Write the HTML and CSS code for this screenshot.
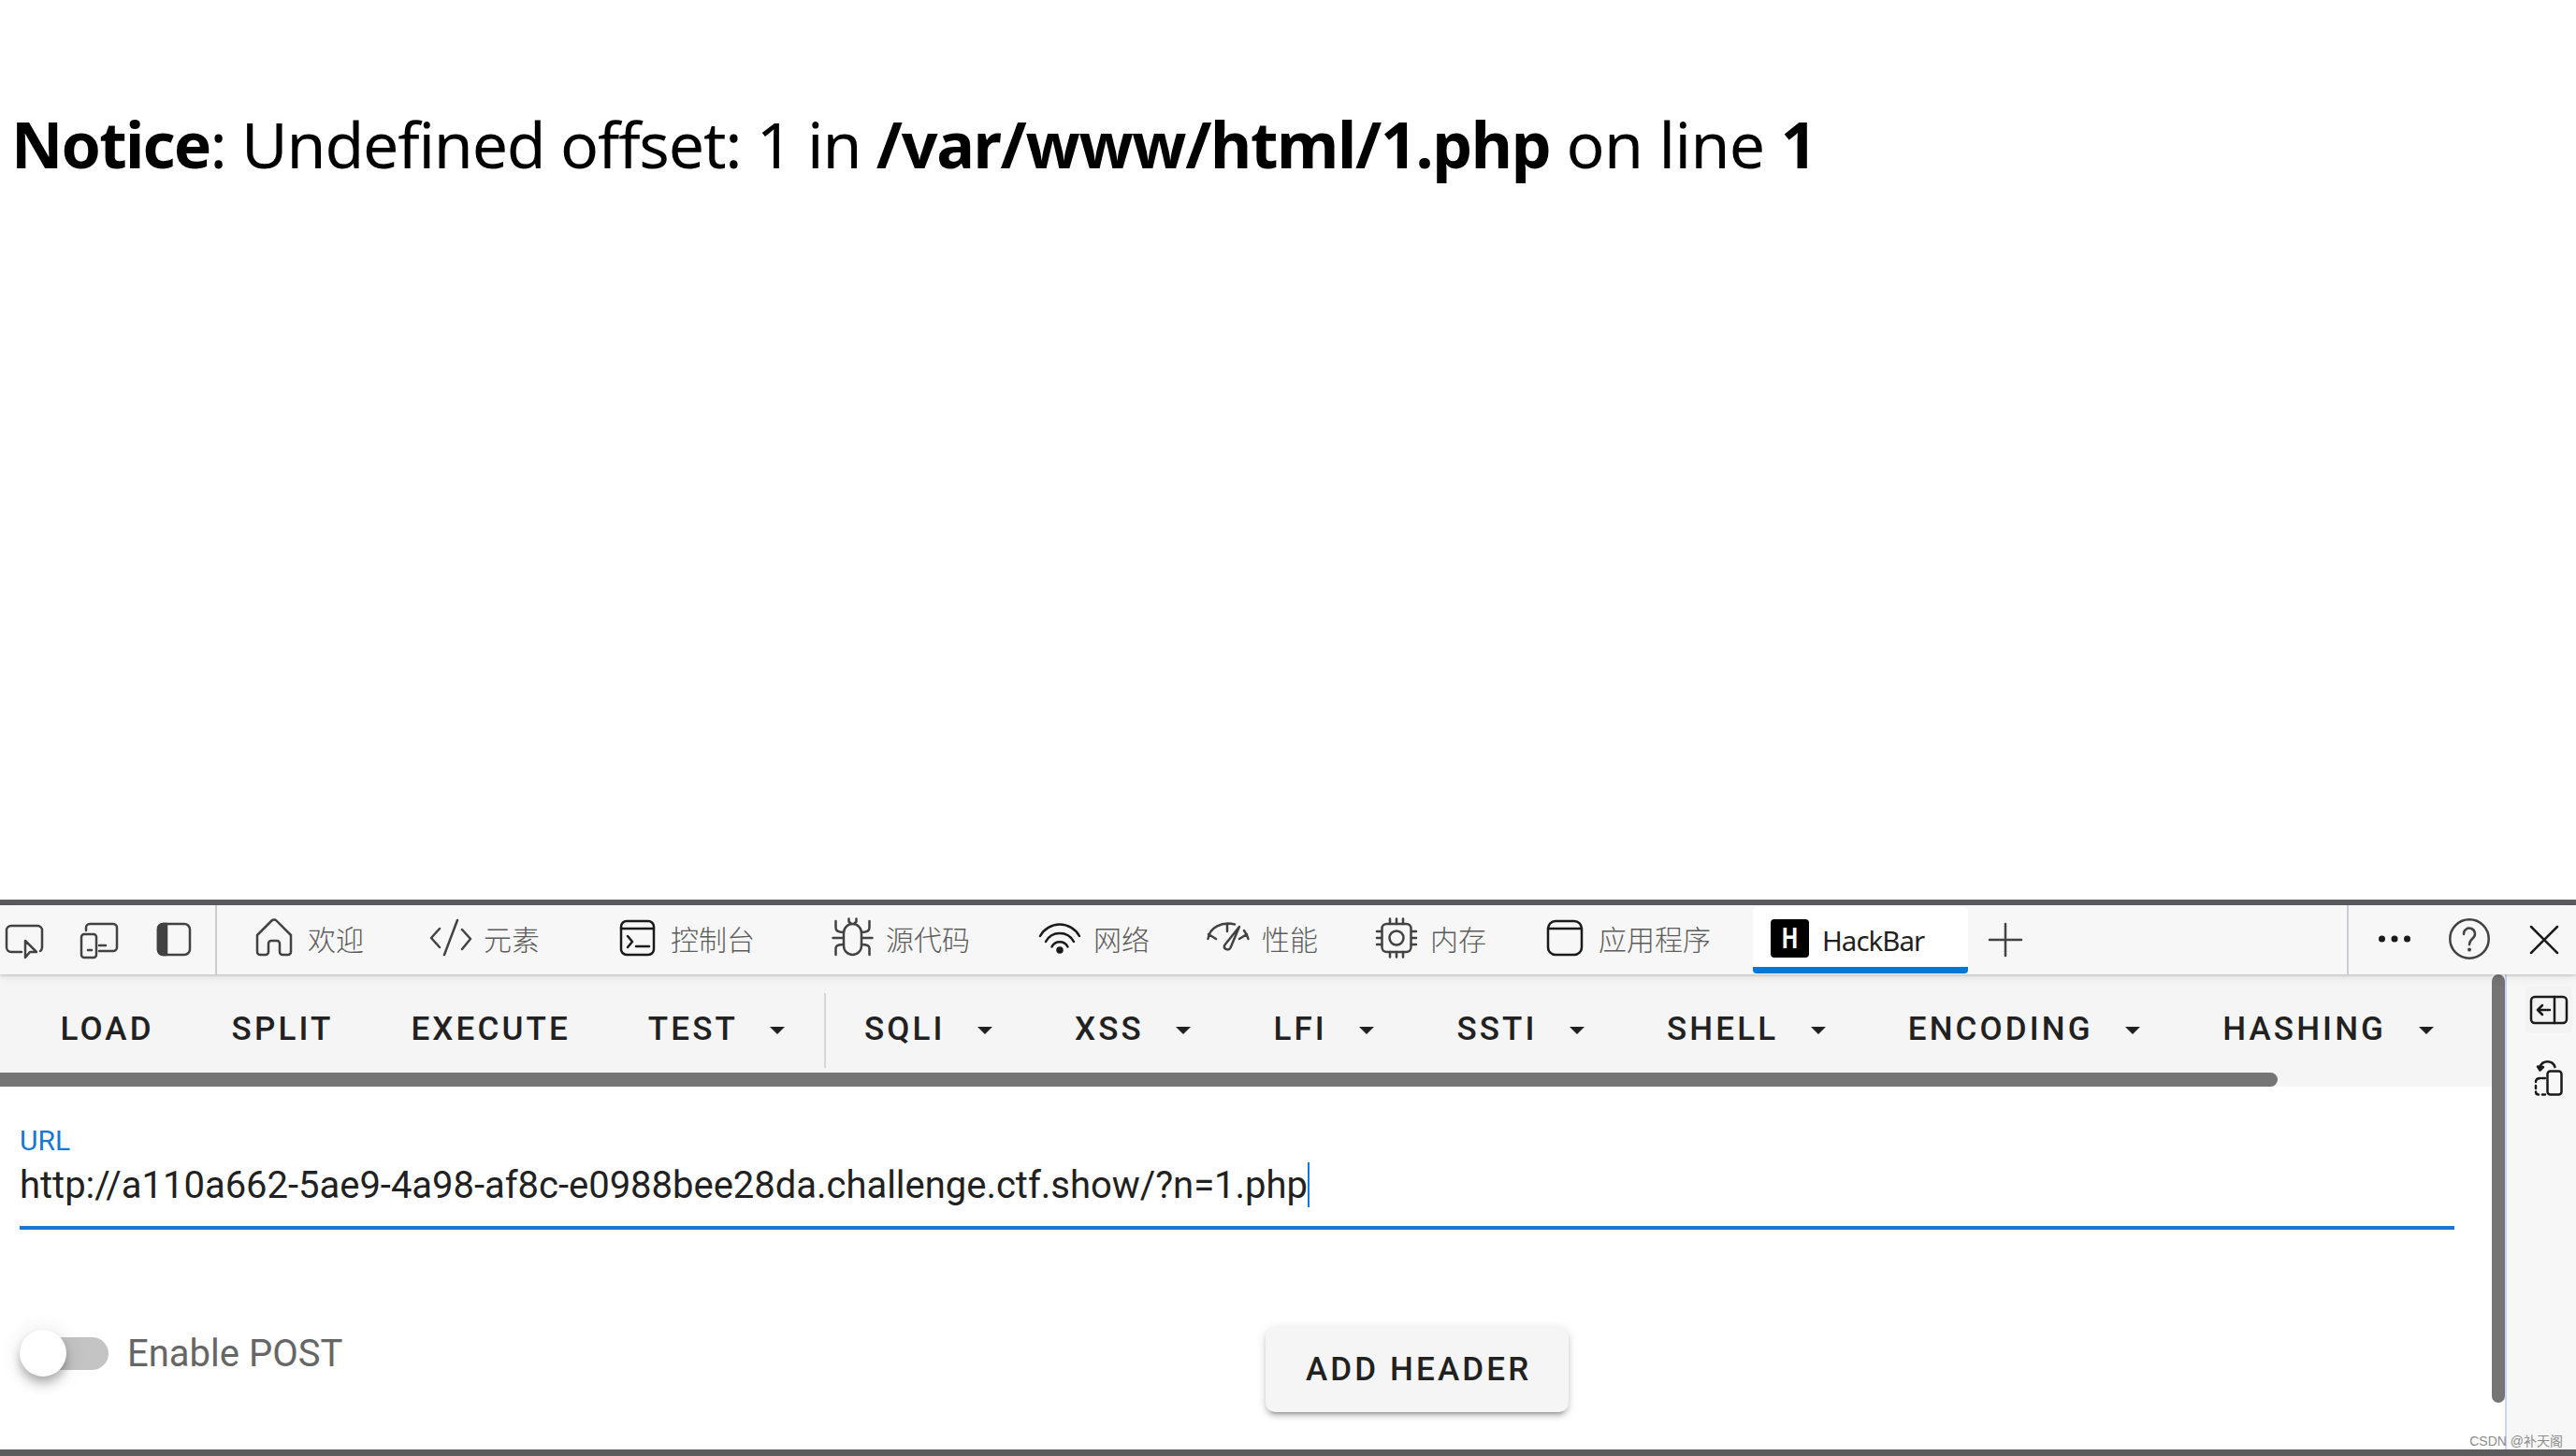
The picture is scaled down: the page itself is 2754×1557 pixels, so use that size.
FILE: index.html
```html
<!DOCTYPE html>
<html lang="zh-CN">
<head>
    <meta charset="UTF-8">
    <title>1.php</title>
    <link rel="stylesheet" href="styles.css">
</head>
<body>

    <div class="page">
        <p class="notice"><b class="word">Notice</b><span class="rest">: Undefined offset: 1 in </span><b class="path">/var/www/html/1.php</b><span class="on"> on line </span><b>1</b></p>
    </div>

    <div class="devtools">
        <div class="tabbar">
            <div class="tools">
                <svg class="icon" width="48" height="48" viewBox="0 0 48 48"><path d="M21 35H10a5 5 0 0 1-5-5V12a5 5 0 0 1 5-5h28a5 5 0 0 1 5 5v18q0 3-2 4M25 23v18l5-6h7z"/></svg>
                <svg class="icon" width="48" height="48" viewBox="0 0 48 48"><path d="M10 12V9a4 4 0 0 1 4-4h25a4 4 0 0 1 4 4v21a4 4 0 0 1-4 4H24M24 28h7M12 33h4"/><rect x="5" y="16" width="16" height="25" rx="3"/></svg>
                <svg class="icon" width="48" height="48" viewBox="0 0 48 48"><rect x="7" y="5" width="34" height="33" rx="6"/><path class="fill" d="M16 5v33h-4a5 5 0 0 1-5-5V10a5 5 0 0 1 5-5z"/></svg>
            </div>
            <div class="tabs">
                <div class="tab"><svg class="icon" width="48" height="48" viewBox="0 0 48 48"><path d="M6 19 21.500 3.500a3.500 3.500 0 0 1 5 0L42 19v18a3 3 0 0 1-3 3h-6a3 3 0 0 1-3-3v-9a3 3 0 0 0-3-3h-6a3 3 0 0 0-3 3v9a3 3 0 0 1-3 3H9a3 3 0 0 1-3-3z"/></svg><span>欢迎</span></div>
                <div class="tab"><svg class="icon" width="48" height="48" viewBox="0 0 48 48"><path d="M13 12 4 22l9 10M37 13l9 10-9 11M32 3 18 40"/></svg><span>元素</span></div>
                <div class="tab"><svg class="icon dark" width="48" height="48" viewBox="0 0 48 48"><rect x="7" y="4" width="35" height="36" rx="6"/><path d="M7 12h35M14 20l5 6-5 6M23 31h14"/></svg><span>控制台</span></div>
                <div class="tab"><svg class="icon" width="48" height="48" viewBox="0 0 48 48"><rect x="15" y="7" width="19" height="33" rx="9.500"/><path d="M20.500 1.500v3l2 2M28.500 1.500v3l-2 2M6.500 4v7q0 5 8.500 5M42.500 4v7q0 5-8.500 5M3.500 22h11M34.500 22h11M6.500 40v-7q0-4 8.500-4M42.500 40v-7q0-4-8.500-4"/></svg><span>源代码</span></div>
                <div class="tab"><svg class="icon dark" width="48" height="48" viewBox="0 0 48 48"><path d="M3 20a24 24 0 0 1 42 0M9 26a17 17 0 0 1 30 0M15.500 31.500a9.500 9.500 0 0 1 17 0"/><circle class="fill" cx="24" cy="35" r="2.500"/></svg><span>网络</span></div>
                <div class="tab"><svg class="icon" width="48" height="48" viewBox="0 0 48 48"><path d="M2.500 23A21.500 18 0 0 1 31 7.500M23 7v8M3 18l8 5M41 14q3 4 4.500 9M44 18l-8 5M36 10 20 30a3.500 3.500 0 0 0 6.500 2.500z"/></svg><span>性能</span></div>
                <div class="tab"><svg class="icon" width="48" height="48" viewBox="0 0 48 48"><rect x="8.500" y="7" width="31" height="30" rx="5"/><circle cx="24" cy="22" r="7.500"/><path d="M17 1.500V7M24 1.500V7M31 1.500V7M17 37v5.500M24 37v5.500M31 37v5.500M3 15h5M3 22h5M3 29h5M40 15h5M40 22h5M40 29h5"/></svg><span>内存</span></div>
                <div class="tab"><svg class="icon dark" width="48" height="48" viewBox="0 0 48 48"><rect x="6" y="4" width="36" height="36" rx="8"/><path d="M6 12h36"/></svg><span>应用程序</span></div>
                <div class="tab active"><div class="logo"><b>H</b></div><span class="title">HackBar</span></div>
                <svg class="icon add" width="40" height="40" viewBox="0 0 40 40"><path d="M3 20h34M20 3v34"/></svg>
            </div>
            <div class="actions">
                <svg class="icon dark" width="48" height="48" viewBox="0 0 48 48"><circle class="dot" cx="10.500" cy="23" r="3.500"/><circle class="dot" cx="24" cy="23" r="3.500"/><circle class="dot" cx="37.500" cy="23" r="3.500"/></svg>
                <svg class="icon" width="48" height="48" viewBox="0 0 48 48"><circle cx="24" cy="23" r="20.700"/><path d="M18 18a6 6 0 1 1 10 4q-4 3.500-4 7"/><circle class="dot" cx="24" cy="34.500" r="2"/></svg>
                <svg class="icon dark" width="48" height="48" viewBox="0 0 48 48"><path d="M10 10l28 28M38 10 10 38"/></svg>
            </div>
        </div>

        <div class="main">
            <div class="panel">
                <div class="menu">
                    <div class="btn">LOAD</div>
                    <div class="btn">SPLIT</div>
                    <div class="btn">EXECUTE</div>
                    <div class="btn drop">TEST</div>
                    <div class="divider"></div>
                    <div class="btn drop">SQLI</div>
                    <div class="btn drop">XSS</div>
                    <div class="btn drop">LFI</div>
                    <div class="btn drop">SSTI</div>
                    <div class="btn drop">SHELL</div>
                    <div class="btn drop">ENCODING</div>
                    <div class="btn drop">HASHING</div>
                </div>
                <div class="scroll-x"></div>

                <div class="field">
                    <label>URL</label>
                    <div class="value"><span class="url">http://a110a662-5ae9-4a98-af8c-e0988bee28da.challenge.ctf.show/?n=1.php</span><span class="caret"></span></div>
                </div>

                <div class="options">
                    <div class="post">
                        <div class="switch"><div class="thumb"></div></div>
                        <span class="post-label">Enable POST</span>
                    </div>
                    <div class="add-header">ADD HEADER</div>
                </div>
            </div>
            <div class="scroll-y"></div>
            <div class="side">
                <div class="side-btn hover"><svg class="icon dark" width="50" height="50" viewBox="0 0 50 50"><rect x="6" y="11" width="38" height="28" rx="4"/><path d="M31 11v28M26 25H13M18 20l-5 5 5 5"/></svg></div>
                <div class="side-btn"><svg class="icon dark" width="50" height="50" viewBox="0 0 50 50"><rect x="23.500" y="19.500" width="15" height="25" rx="3"/><path d="M18 27h3M16 27q-5 0-5 4M11 35v3M11 41.500q0 3 3 3M18 44.500h3M31.500 15a8.500 8.500 0 0 0-16 0"/><path class="fill" d="M13 14.500l6 .500-3.500 3.500z"/></svg></div>
            </div>
        </div>
        <div class="bottom"></div>
    </div>

    <div class="watermark">CSDN @补天阁</div>

</body>
</html>
```
FILE: styles.css
```css
* {
    box-sizing: border-box;
}
body {
    margin: 0;
    height: 1557px;
    display: flex;
    flex-direction: column;
    overflow: hidden;
    background-color: #fff;
    font-family: Roboto, "Noto Sans CJK SC", sans-serif;
}
.page {
    height: 962px;
    padding: 104px 12px 0;
}
.notice {
    margin: 0;
    font-family: "Noto Sans", sans-serif;
    font-size: 68px;
    line-height: 100px;
    color: #000;
    white-space: pre;
}
.notice .word {
    letter-spacing: -1.8px;
}
.notice .rest {
    letter-spacing: -1.18px;
}
.notice .path {
    letter-spacing: -1.33px;
}
.notice .on {
    letter-spacing: -0.6px;
}
.devtools {
    flex: 1;
    display: flex;
    flex-direction: column;
    border-top: 6px solid #5c5c60;
}
.tabbar {
    display: flex;
    height: 74px;
    background-color: #f7f7f7;
    position: relative;
    box-shadow: 0 1px 3px rgba(0, 0, 0, 0.2), 0 3px 12px rgba(0, 0, 0, 0.08);
}
.icon {
    display: block;
    flex: none;
    fill: none;
    stroke: #424242;
    stroke-width: 2.5;
    stroke-linecap: round;
    stroke-linejoin: round;
}
.icon.dark {
    stroke: #1a1a1a;
}
.icon .fill {
    fill: #424242;
}
.icon.dark .fill {
    fill: #1a1a1a;
}
.icon .dot {
    fill: #424242;
    stroke: none;
}
.icon.dark .dot {
    fill: #1a1a1a;
}
.tools {
    display: flex;
    gap: 32px;
    width: 232px;
    padding: 15px 0 0 2px;
    border-right: 2px solid #cacdd1;
}
.tabs {
    flex: 1;
    display: grid;
    grid-template-columns: 188px 200px 230px 222px 180px 180px 180px 225px 230px 60px;
    padding-left: 37px;
}
.tab {
    display: flex;
    padding-top: 13px;
    font-family: "Noto Sans", "Noto Sans CJK SC", sans-serif;
    font-size: 30px;
    font-weight: 300;
    line-height: 48px;
    color: #5c5c5c;
    white-space: nowrap;
}
.tab span {
    margin-left: 12px;
}
.tab.active {
    margin-top: 2px;
    height: 71px;
    background-color: #fff;
    border-bottom: 7px solid #0078d7;
    border-radius: 4px;
    color: #1f1f1f;
}
.logo {
    width: 41px;
    height: 41px;
    margin-left: 19px;
    border-radius: 4px;
    background-color: #000;
    color: #fff;
    font: 32px/41px Roboto, sans-serif;
    text-align: center;
}
.logo b {
    display: block;
    transform: scaleX(0.75);
}
.tab .title {
    margin-left: 14px;
    font-size: 29.5px;
    font-weight: 400;
    line-height: 46px;
    letter-spacing: -1px;
}
.icon.add {
    margin: 17px 0 0 20px;
}
.actions {
    display: flex;
    gap: 32px;
    width: 245px;
    padding: 13px 0 0 25px;
    border-left: 2px solid #cacdd1;
}
.main {
    flex: 1;
    display: flex;
}
.panel {
    width: 2664px;
}
.menu {
    display: flex;
    height: 105px;
    padding-left: 24.5px;
    background-color: #f5f5f5;
}
.btn {
    display: flex;
    padding: 0 43px 0 40px;
    font-size: 35px;
    font-weight: 500;
    line-height: 118px;
    letter-spacing: 3.125px;
    color: #212121;
}
.btn.drop {
    padding-right: 48px;
}
.btn.drop::after {
    content: "";
    align-self: flex-start;
    margin: 56px 0 0 34.5px;
    border: 8.5px solid transparent;
    border-top-color: #212121;
    border-bottom: none;
}
.divider {
    width: 2px;
    height: 80px;
    margin: 20px 0.5px 0 -6px;
    background-color: #d6d6d6;
}
.scroll-x {
    height: 15px;
    background: #f5f5f5;
}
.scroll-x::before {
    content: "";
    display: block;
    width: 2435px;
    height: 15px;
    border-radius: 0 8px 8px 0;
    background-color: #757575;
}
.field {
    width: 2603px;
    height: 153px;
    margin-left: 21px;
    padding-top: 39px;
    border-bottom: 4px solid #1976d2;
}
.field label {
    display: block;
    font-size: 30px;
    line-height: 38px;
    color: #1976d2;
}
.value {
    display: flex;
    align-items: center;
    height: 56px;
    font-size: 40px;
    letter-spacing: -0.026px;
    color: #212121;
}
.caret {
    width: 2px;
    height: 48px;
    background-color: #1976d2;
}
.options {
    display: flex;
    align-items: flex-start;
    padding: 104px 0 0 21px;
}
.post {
    display: flex;
    align-items: center;
    width: 1332px;
    height: 56px;
    font-size: 40px;
    color: #666;
}
.switch {
    width: 90px;
    height: 35px;
    margin: 0 20px 0 5px;
    border-radius: 18px;
    background-color: #c4c4c4;
}
.thumb {
    width: 50px;
    height: 50px;
    margin: -8px 0 0 -5px;
    border-radius: 50%;
    background-color: #fff;
    box-shadow: 0 5px 10px -2px rgba(0, 0, 0, 0.2), 0 10px 12px rgba(0, 0, 0, 0.14), 0 2px 25px rgba(0, 0, 0, 0.12);
}
.add-header {
    width: 324px;
    height: 91px;
    border-radius: 10px;
    background-color: #f5f5f5;
    box-shadow: 0 7px 3px -5px rgba(0, 0, 0, 0.2), 0 5px 5px rgba(0, 0, 0, 0.14), 0 2px 12px rgba(0, 0, 0, 0.12);
    padding-left: 43px;
    font-size: 35px;
    font-weight: 500;
    line-height: 91px;
    letter-spacing: 3.125px;
    color: #212121;
}
.scroll-y {
    width: 14px;
    height: 458px;
    border-radius: 7px;
    background-color: #757575;
}
.side {
    flex: 1;
    padding: 13px 0 0 20px;
    background-color: #f7f7f7;
    border-left: 2px solid #c8d6f0;
}
.side-btn {
    width: 50px;
    height: 50px;
    margin-bottom: 21px;
    border-radius: 5px;
}
.side-btn.hover {
    background-color: #f3f3f3;
}
.bottom {
    height: 7px;
    background-color: #5c5c5e;
}
.watermark {
    position: absolute;
    right: 14px;
    bottom: 5px;
    font-family: "Liberation Sans", "Noto Sans CJK SC", sans-serif;
    font-size: 14px;
    line-height: 22px;
    color: #8c8c8c;
    white-space: nowrap;
}
```
